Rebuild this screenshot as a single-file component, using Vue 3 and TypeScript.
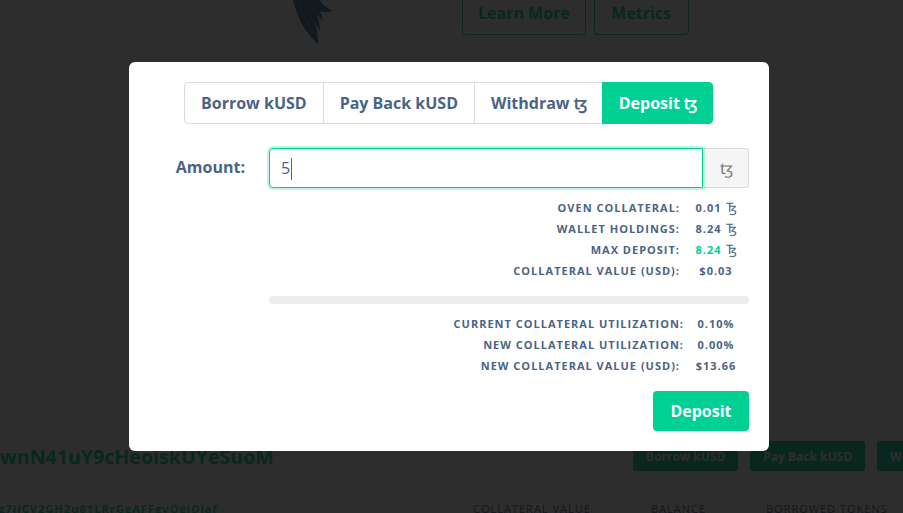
<template>
  <div class="page">
    <section class="hero">
      <svg class="wing" width="40" height="44" viewBox="0 0 40 44">
        <path d="M0 0H27C29 4 32 7 39.500 10.500C39 12 33 13 28.500 11.500L26.500 11C28.500 14 29.500 17 29.500 21L24 14.500C26 20 27 25 26.500 31L22 23C24 29 25.500 37 25 44C14 35 4 18 0 0Z" fill="#3a6f95" />
        <path d="M6 0C9 13 14 25 25 40M12 0C14 9 19 21 26.500 30M18 0C20 7 24 15 29 20M23 0C25 4 28 9 34 11.500" fill="none" stroke="#fff" stroke-opacity=".3" stroke-width=".8" />
      </svg>
      <div class="hero-actions">
        <a class="outline-btn">Learn More</a>
        <a class="outline-btn">Metrics</a>
      </div>
    </section>

    <section class="oven">
      <h2 class="oven-title">wnN41uY9cHeoiskUYeSuoM</h2>
      <div class="oven-actions">
        <a class="solid-btn">Borrow kUSD</a>
        <a class="solid-btn">Pay Back kUSD</a>
        <a class="solid-btn">Withdraw <span class="tez">ꜩ</span></a>
      </div>
    </section>

    <section class="oven-meta">
      <span class="oven-owner">z7jiCV2GH2u81LRrGgAFFgvOgiDiaf</span>
      <span class="head head-collateral">COLLATERAL VALUE</span>
      <span class="head head-balance">BALANCE</span>
      <span class="head head-borrowed">BORROWED TOKENS</span>
    </section>

    <div class="overlay">
      <div class="modal">
        <div class="tabs">
          <button v-for="t in tabs" :key="t.label" class="tab" :class="{ active: t.active }">
            {{ t.label }}
            <span v-if="t.tez" class="tez">ꜩ</span>
          </button>
        </div>

        <div class="amount">
          <label class="amount-label" for="amount">Amount:</label>
          <div class="amount-body">
            <div class="amount-input" id="amount">5<span class="caret"></span></div>
            <span class="addon"><span class="tez">ꜩ</span></span>
          </div>
        </div>

        <div class="stats">
          <div v-for="s in stats" :key="s.label" class="stat">
            <span class="stat-label">{{ s.label }}:</span>
            <span class="stat-value" :class="{ hot: s.hot }"><b>{{ s.value }}</b><i v-if="s.unit" class="tez">ꜩ</i></span>
          </div>
        </div>

        <div class="bar"></div>

        <div class="stats">
          <div v-for="s in results" :key="s.label" class="stat" :class="{ narrow: s.narrow }">
            <span class="stat-label">{{ s.label }}:</span>
            <span class="stat-value"><b>{{ s.value }}</b></span>
          </div>
        </div>

        <div class="footer">
          <button class="submit">Deposit</button>
        </div>
      </div>
    </div>
  </div>
</template>

<script setup lang="ts">
const tabs = [
  { label: 'Borrow kUSD' },
  { label: 'Pay Back kUSD' },
  { label: 'Withdraw', tez: true },
  { label: 'Deposit', tez: true, active: true }
]

const stats = [
  { label: 'Oven Collateral', value: '0.01', unit: true },
  { label: 'Wallet Holdings', value: '8.24', unit: true },
  { label: 'Max Deposit', value: '8.24', unit: true, hot: true },
  { label: 'Collateral Value (USD)', value: '$0.03' }
]

const results = [
  { label: 'Current Collateral Utilization', value: '0.10%', narrow: true },
  { label: 'New Collateral Utilization', value: '0.00%', narrow: true },
  { label: 'New Collateral Value (USD)', value: '$13.66' }
]
</script>

<style>
html,
body {
  margin: 0;
  height: 100%;
  overflow: hidden;
  background: #fff;
}
</style>

<style scoped>
.page {
  position: relative;
  width: 903px;
  height: 513px;
  overflow: hidden;
  font-family: 'Open Sans', 'DejaVu Sans', sans-serif;
  color: #4a6484;
}

.tez {
  font-family: Lato, 'Open Sans', sans-serif;
}

.hero {
  display: flex;
  height: 441px;
  padding-left: 293px;
  align-items: flex-start;
  box-sizing: border-box;
}

.wing {
  flex: none;
}

.hero-actions {
  display: flex;
  gap: 8px;
  margin-left: 129px;
  margin-top: -10px;
}

.outline-btn {
  display: flex;
  align-items: center;
  justify-content: center;
  box-sizing: border-box;
  height: 45px;
  padding: 0 15px;
  border: 1px solid #00d094;
  border-radius: 4px;
  color: #00d094;
  font-size: 16px;
  font-weight: 700;
}

.outline-btn + .outline-btn {
  padding: 0 16.5px;
}

.oven {
  display: flex;
  justify-content: space-between;
  align-items: center;
  height: 30px;
}

.oven-title {
  margin: 0;
  font-size: 19.6px;
  font-weight: 700;
  color: #00d094;
  white-space: nowrap;
}

.oven-actions {
  display: flex;
  gap: 12px;
  margin-right: -73px;
}

.solid-btn {
  display: flex;
  align-items: center;
  gap: 4px;
  height: 30px;
  padding: 0 13px;
  border-radius: 3px;
  background: #00d094;
  color: #fff;
  font-size: 12px;
  font-weight: 700;
  white-space: nowrap;
}

.oven-meta {
  display: flex;
  align-items: baseline;
  margin-top: 30px;
  white-space: nowrap;
}

.oven-owner {
  margin-left: -1px;
  width: 474px;
  font-size: 11px;
  font-weight: 700;
  letter-spacing: 1.07px;
  color: #00d094;
}

.head {
  font-size: 11px;
  letter-spacing: 1px;
}

.head-collateral {
  width: 178px;
}

.head-balance {
  width: 115px;
}

.overlay {
  position: absolute;
  inset: 0;
  display: flex;
  align-items: center;
  justify-content: center;
  padding-right: 5px;
  background: rgba(10, 10, 10, 0.86);
}

.modal {
  box-sizing: border-box;
  width: 640px;
  height: 389px;
  padding: 20px;
  background: #fff;
  border-radius: 6px;
}

.tabs {
  display: flex;
  justify-content: center;
}

.tab {
  height: 42px;
  padding: 0 16px;
  margin-left: -1px;
  border: 1px solid #dbdbdb;
  background: #fff;
  color: #4a6484;
  font: 700 16px 'Open Sans', 'DejaVu Sans', sans-serif;
  white-space: nowrap;
}

.tab .tez {
  letter-spacing: -1px;
}

.tab:first-child {
  border-radius: 4px 0 0 4px;
}

.tab:last-child {
  border-radius: 0 4px 4px 0;
}

.tab.active {
  background: #00d094;
  border-color: #00d094;
  color: #fff;
}

.amount {
  display: flex;
  gap: 24px;
  margin-top: 24px;
}

.amount-label {
  width: 96px;
  padding-top: 8px;
  text-align: right;
  font-size: 16px;
  font-weight: 700;
}

.amount-body {
  display: flex;
  width: 480px;
}

.amount-input {
  position: relative;
  z-index: 1;
  flex: 1;
  box-sizing: border-box;
  height: 40px;
  padding: 0 11px;
  border: 1px solid #00d094;
  border-radius: 4px 0 0 4px;
  box-shadow: 0 0 0 2px rgba(0, 208, 148, 0.25);
  font-size: 16px;
  line-height: 38px;
}

.caret {
  display: inline-block;
  width: 1px;
  height: 22px;
  margin-left: 1px;
  background: #4a6484;
  vertical-align: -6px;
}

.addon {
  display: flex;
  align-items: center;
  justify-content: center;
  box-sizing: border-box;
  width: 45px;
  margin-left: 1px;
  border: 1px solid #dbdbdb;
  border-left: 0;
  border-radius: 0 4px 4px 0;
  background: #f5f5f5;
  color: #7a7a7a;
  font-size: 16px;
}

.stats {
  margin-top: 9px;
}

.bar + .stats {
  margin-top: 9px;
}

.stat {
  display: flex;
  justify-content: flex-end;
  height: 21px;
  line-height: 21px;
  font-size: 11px;
  font-weight: 700;
  letter-spacing: 1px;
  text-transform: uppercase;
}

.stat-value {
  display: flex;
  justify-content: center;
  box-sizing: border-box;
  width: 40px;
  margin-left: 16px;
  margin-right: 13px;
  white-space: nowrap;
}

.stat.narrow .stat-value {
  width: 36px;
  margin-left: 14px;
  margin-right: 15px;
}

.stat-value b {
  font-weight: 700;
}

.stat-value i {
  margin-left: 4px;
  font-size: 13px;
  font-style: normal;
  font-weight: 400;
  letter-spacing: 0;
}

.hot b {
  color: #00d094;
}

.bar {
  height: 8px;
  margin: 15px 0 0 120px;
  border-radius: 4px;
  background: #ededed;
}

.footer {
  display: flex;
  justify-content: flex-end;
  margin-top: 15px;
}

.submit {
  width: 96px;
  height: 40px;
  border: 0;
  border-radius: 4px;
  background: #00d094;
  color: #fff;
  font: 700 16px 'Open Sans', sans-serif;
}
</style>
